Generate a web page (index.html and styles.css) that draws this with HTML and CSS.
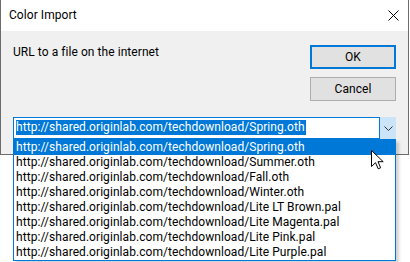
FILE: index.html
```html
<!DOCTYPE html>
<html>
<head>
<meta charset="utf-8">
<link rel="stylesheet" href="styles.css">
</head>
<body>
<div class="window">
  <div class="titlebar">
    <span class="title">Color Import</span>
    <svg class="close" width="11" height="11" viewBox="0 0 11 11"><path d="M0.5 0.5L10.5 10.5M10.5 0.5L0.5 10.5" stroke="#000" stroke-width="1" fill="none"/></svg>
  </div>
  <div class="content">
    <div class="toprow">
      <div class="label">URL to a file on the internet</div>
      <div class="buttons">
        <div class="btn btn-default">OK</div>
        <div class="btn">Cancel</div>
      </div>
    </div>
    <div class="combo">
      <div class="combo-field"><span class="combo-sel">http://shared.originlab.com/techdownload/Spring.oth</span></div>
      <div class="combo-arrow">
        <svg width="9" height="5" viewBox="0 0 9 5"><path d="M0.5 0.5L4.5 4.5L8.5 0.5" stroke="#333" stroke-width="1" fill="none"/></svg>
      </div>
      <div class="dropdown">
        <div class="item item-hot">http://shared.originlab.com/techdownload/Spring.oth</div>
        <div class="item">http://shared.originlab.com/techdownload/Summer.oth</div>
        <div class="item">http://shared.originlab.com/techdownload/Fall.oth</div>
        <div class="item">http://shared.originlab.com/techdownload/Winter.oth</div>
        <div class="item">http://shared.originlab.com/techdownload/Lite LT Brown.pal</div>
        <div class="item">http://shared.originlab.com/techdownload/Lite Magenta.pal</div>
        <div class="item">http://shared.originlab.com/techdownload/Lite Pink.pal</div>
        <div class="item">http://shared.originlab.com/techdownload/Lite Purple.pal</div>
      </div>
    </div>
  </div>
</div>
<svg class="cursor" width="13" height="20" viewBox="0 0 13 20"><path d="M0.5 0.5L0.5 16.5L4.5 12.7L7.2 18.8L9.6 17.8L7 11.7L12.2 11.7Z" fill="#fff" stroke="#000" stroke-width="1" stroke-linejoin="miter"/></svg>
</body>
</html>
```
FILE: styles.css
```css
html, body {
  margin: 0;
  padding: 0;
  background: #ffffff;
}
body {
  position: relative;
  width: 410px;
  height: 262px;
  overflow: hidden;
  font-family: Roboto, "Liberation Sans", sans-serif;
  font-size: 12px;
  letter-spacing: 0.06px;
  color: #000;
}
.window {
  width: 409px;
  height: 155px;
  box-sizing: border-box;
  border: 1px solid #6b6b6b;
  border-top: none;
  background: #f0f0f0;
}
.titlebar {
  height: 31px;
  background: #ffffff;
  display: flex;
  align-items: center;
  justify-content: space-between;
  padding: 0 9px 0 8px;
}
.title {
  line-height: 15px;
  padding-bottom: 1px;
}
.close {
  display: block;
  margin-bottom: 1px;
}
.content {
  padding: 14px 12px 0 12px;
}
.toprow {
  display: flex;
  justify-content: space-between;
  align-items: flex-start;
}
.label {
  line-height: 15px;
  margin-top: 0;
}
.buttons {
  display: flex;
  flex-direction: column;
  gap: 8px;
}
.btn {
  width: 86px;
  height: 24px;
  box-sizing: border-box;
  border: 1px solid #adadad;
  background: #e1e1e1;
  display: flex;
  align-items: center;
  justify-content: center;
  line-height: 15px;
}
.btn-default {
  border: 2px solid #0078d7;
}
.combo {
  position: relative;
  margin-top: 16px;
  height: 22px;
  box-sizing: border-box;
  border: 1px solid #0078d7;
  background: #fff;
  display: flex;
}
.combo-field {
  flex: 1;
  padding: 2px 0 0 2px;
}
.combo-sel {
  display: inline-block;
  background: #0078d7;
  color: #fff;
  line-height: 15px;
  padding: 0 1px 0 0;
}
.combo-arrow {
  width: 16px;
  margin: -1px -1px -1px 0;
  border-left: 1px solid #0078d7;
  background: #cce4f7;
  display: flex;
  align-items: center;
  justify-content: center;
}
.combo-arrow svg {
  display: block;
}
.dropdown {
  position: absolute;
  top: 21px;
  left: -1px;
  width: 383px;
  box-sizing: border-box;
  border: 1px solid #0078d7;
  background: #fff;
  padding: 0;
  box-shadow: 3px 3px 3px rgba(0, 0, 0, 0.18);
}
.item {
  height: 15px;
  line-height: 15px;
  padding-left: 2px;
  white-space: nowrap;
}
.item-hot {
  background: #0078d7;
  color: #fff;
}
.cursor {
  position: absolute;
  left: 371px;
  top: 150px;
}
```
